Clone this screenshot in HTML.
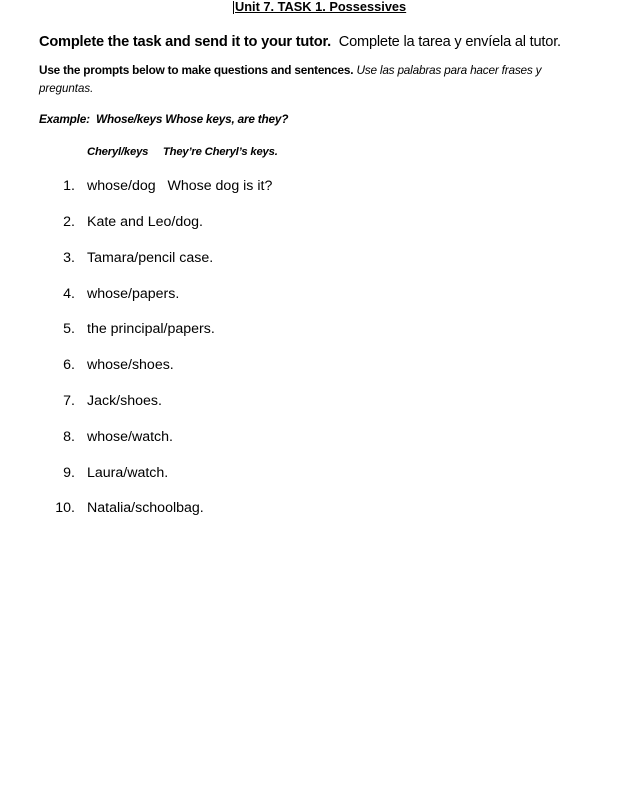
<!DOCTYPE html>
<html><head><meta charset="utf-8"><style>
body{margin:0;width:641px;height:786px;background:#fff;font-family:"Liberation Sans",sans-serif;color:#000;position:relative;overflow:hidden}
div{position:absolute;white-space:nowrap;line-height:1}
.t{left:233px;top:1px;font-size:12.8px;font-weight:bold;text-decoration:underline;border-left:1px solid #000;padding-left:1px}
.i{font-size:14.2px}
.n{width:30px;text-align:right;left:45px}
.x{left:87px}
</style></head><body>
<div class="t">Unit 7. TASK 1. Possessives</div>
<div style="left:39px;top:35px;font-size:14.6px;letter-spacing:-0.2px"><b>Complete the task and send it to your tutor.</b>&nbsp; Complete la tarea y envíela al tutor.</div>
<div style="left:39px;top:65px;font-size:11.8px;letter-spacing:-0.2px"><b>Use the prompts below to make questions and sentences.</b> <i>Use las palabras para hacer frases y</i></div>
<div style="left:39px;top:84px;font-size:11.5px"><i>preguntas.</i></div>
<div style="left:39px;top:114px;font-size:11.8px;font-weight:bold;font-style:italic;letter-spacing:-0.2px">Example:&nbsp; Whose/keys Whose keys, are they?</div>
<div style="left:87px;top:147px;font-size:11.3px;font-weight:bold;font-style:italic;letter-spacing:-0.2px">Cheryl/keys&nbsp;&nbsp;&nbsp;&nbsp; They’re Cheryl’s keys.</div>
<div class="i n" style="top:179px">1.</div><div class="i x" style="top:179px">whose/dog&nbsp;&nbsp; Whose dog is it?</div>
<div class="i n" style="top:215px">2.</div><div class="i x" style="top:215px">Kate and Leo/dog.</div>
<div class="i n" style="top:251px">3.</div><div class="i x" style="top:251px">Tamara/pencil case.</div>
<div class="i n" style="top:287px">4.</div><div class="i x" style="top:287px">whose/papers.</div>
<div class="i n" style="top:322px">5.</div><div class="i x" style="top:322px">the principal/papers.</div>
<div class="i n" style="top:358px">6.</div><div class="i x" style="top:358px">whose/shoes.</div>
<div class="i n" style="top:394px">7.</div><div class="i x" style="top:394px">Jack/shoes.</div>
<div class="i n" style="top:430px">8.</div><div class="i x" style="top:430px">whose/watch.</div>
<div class="i n" style="top:466px">9.</div><div class="i x" style="top:466px">Laura/watch.</div>
<div class="i n" style="top:501px">10.</div><div class="i x" style="top:501px">Natalia/schoolbag.</div>
</body></html>
